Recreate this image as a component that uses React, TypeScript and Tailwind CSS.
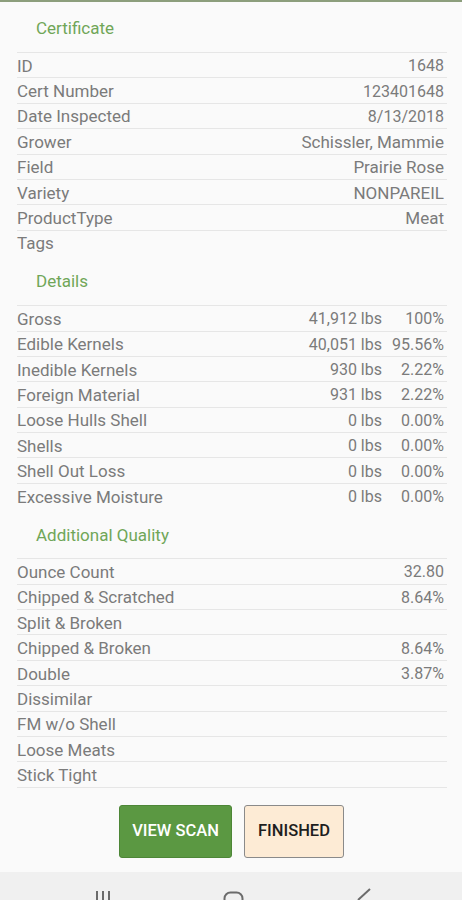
import React from 'react';

const certificate: [string, string][] = [
  ['ID', '1648'],
  ['Cert Number', '123401648'],
  ['Date Inspected', '8/13/2018'],
  ['Grower', 'Schissler, Mammie'],
  ['Field', 'Prairie Rose'],
  ['Variety', 'NONPAREIL'],
  ['ProductType', 'Meat'],
  ['Tags', ''],
];

const details: [string, string, string][] = [
  ['Gross', '41,912 lbs', '100%'],
  ['Edible Kernels', '40,051 lbs', '95.56%'],
  ['Inedible Kernels', '930 lbs', '2.22%'],
  ['Foreign Material', '931 lbs', '2.22%'],
  ['Loose Hulls Shell', '0 lbs', '0.00%'],
  ['Shells', '0 lbs', '0.00%'],
  ['Shell Out Loss', '0 lbs', '0.00%'],
  ['Excessive Moisture', '0 lbs', '0.00%'],
];

const quality: [string, string][] = [
  ['Ounce Count', '32.80'],
  ['Chipped & Scratched', '8.64%'],
  ['Split & Broken', ''],
  ['Chipped & Broken', '8.64%'],
  ['Double', '3.87%'],
  ['Dissimilar', ''],
  ['FM w/o Shell', ''],
  ['Loose Meats', ''],
  ['Stick Tight', ''],
];

const isNumeric = (v: string) => /^[\d.,/%]+$/.test(v);

function SectionHeader({ title }: { title: string }) {
  return (
    <div className="h-[50px] flex items-center pt-[4px] pl-[36px] text-[17px] text-[#70a658]">
      {title}
    </div>
  );
}

function Row({ label, children }: { label: string; children?: React.ReactNode }) {
  return (
    <div className="h-[25.4px] border-t-[1.5px] border-[#e6e6e6] flex items-center justify-between pt-[2px] pr-[3px] text-[17px] text-[#7b7b7b] leading-none">
      <span>{label}</span>
      <div className="flex items-center">{children}</div>
    </div>
  );
}

function Value({ value }: { value: string }) {
  return <span className={isNumeric(value) ? 'text-[16px]' : 'text-[17px]'}>{value}</span>;
}

export default function App() {
  return (
    <div
      className="h-[900px] w-[462px] overflow-hidden bg-[#fafafa] flex flex-col"
      style={{ fontFamily: 'Roboto, "Noto Sans", sans-serif' }}
    >
      <div className="h-[2px] bg-[#8c9e7c]" />

      <div className="pl-[17px] pr-[15px]">
        {/* Certificate */}
        <div className="-ml-[17px]">
          <SectionHeader title="Certificate" />
        </div>
        {certificate.map(([label, value]) => (
          <Row key={label} label={label}>
            <Value value={value} />
          </Row>
        ))}

        {/* Details */}
        <div className="-ml-[17px]">
          <SectionHeader title="Details" />
        </div>
        {details.map(([label, lbs, pct]) => (
          <Row key={label} label={label}>
            <span className="text-[16px]">{lbs}</span>
            <span className="w-[62px] text-right text-[16px]">{pct}</span>
          </Row>
        ))}

        {/* Additional Quality */}
        <div className="-ml-[17px]">
          <SectionHeader title="Additional Quality" />
        </div>
        <div className="border-b-[1.5px] border-[#e6e6e6]">
          {quality.map(([label, value]) => (
            <Row key={label} label={label}>
              <Value value={value} />
            </Row>
          ))}
        </div>
      </div>

      <div className="flex justify-center gap-3 pt-[17px] pl-[1px]">
        <button className="w-[113px] h-[53px] bg-[#5b9842] border border-[#4d8637] rounded-[3px] text-white text-[16.5px] font-medium">
          VIEW SCAN
        </button>
        <button className="w-[100px] h-[53px] bg-[#fdebd5] border border-[#8a8a8a] rounded-[3px] text-[#1e1e1e] text-[16.5px] font-medium">
          FINISHED
        </button>
      </div>

      <div className="mt-auto h-[28px] bg-[#f0f0f0] relative overflow-hidden">
        <svg className="absolute left-[95px] top-[19px]" width="16" height="20" viewBox="0 0 16 20" fill="none" stroke="#6b6b6b" strokeWidth="2">
          <path d="M2 0v20M8 0v20M14 0v20" />
        </svg>
        <svg className="absolute left-[223px] top-[19px]" width="21" height="21" viewBox="0 0 21 21" fill="none" stroke="#6b6b6b" strokeWidth="2">
          <rect x="1.5" y="1.5" width="18" height="18" rx="6" />
        </svg>
        <svg className="absolute left-[354px] top-[16px]" width="18" height="20" viewBox="0 0 18 20" fill="none" stroke="#6b6b6b" strokeWidth="2">
          <path d="M16 1L4 12" />
        </svg>
      </div>
    </div>
  );
}
